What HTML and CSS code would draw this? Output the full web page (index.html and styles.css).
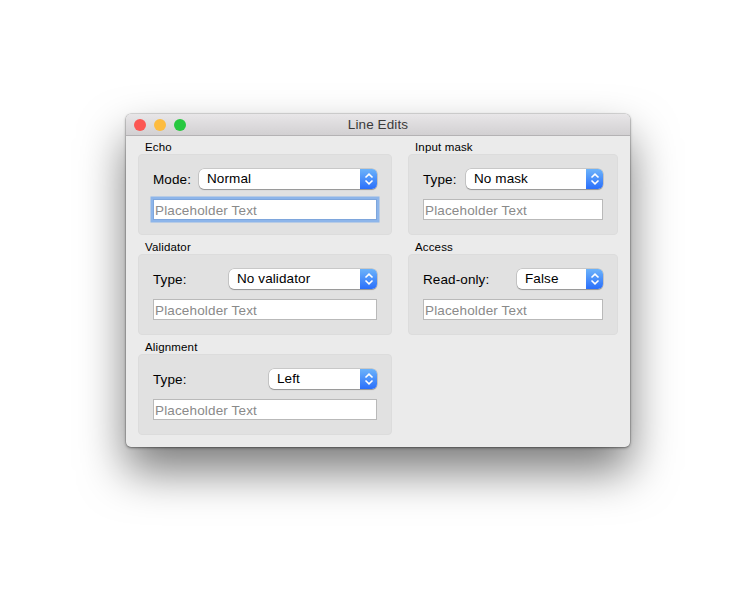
FILE: index.html
```html
<!DOCTYPE html>
<html lang="en">
<head>
    <meta charset="UTF-8">
    <title>Line Edits</title>
    <link rel="stylesheet" href="styles.css">
</head>
<body>
    <div class="window">
        <div class="titlebar">
            <div class="traffic">
                <span class="light light-close"></span>
                <span class="light light-min"></span>
                <span class="light light-max"></span>
            </div>
            <div class="window-title">Line Edits</div>
        </div>
        <div class="content">
            <section class="group">
                <div class="group-title">Echo</div>
                <div class="group-box">
                    <div class="row">
                        <span class="row-label">Mode:</span>
                        <div class="combo combo-echo">
                            <span class="combo-value">Normal</span>
                            <span class="combo-arrows"><svg width="10" height="14" viewBox="0 0 10 14"><path d="M1.5 5.5 5 2.2 8.5 5.5M1.5 8.5 5 11.8 8.5 8.5"/></svg></span>
                        </div>
                    </div>
                    <input class="field field-focus" type="text" placeholder="Placeholder Text">
                </div>
            </section>
            <section class="group">
                <div class="group-title">Input mask</div>
                <div class="group-box">
                    <div class="row">
                        <span class="row-label">Type:</span>
                        <div class="combo combo-mask">
                            <span class="combo-value">No mask</span>
                            <span class="combo-arrows"><svg width="10" height="14" viewBox="0 0 10 14"><path d="M1.5 5.5 5 2.2 8.5 5.5M1.5 8.5 5 11.8 8.5 8.5"/></svg></span>
                        </div>
                    </div>
                    <input class="field" type="text" placeholder="Placeholder Text">
                </div>
            </section>
            <section class="group">
                <div class="group-title">Validator</div>
                <div class="group-box">
                    <div class="row">
                        <span class="row-label">Type:</span>
                        <div class="combo combo-validator">
                            <span class="combo-value">No validator</span>
                            <span class="combo-arrows"><svg width="10" height="14" viewBox="0 0 10 14"><path d="M1.5 5.5 5 2.2 8.5 5.5M1.5 8.5 5 11.8 8.5 8.5"/></svg></span>
                        </div>
                    </div>
                    <input class="field" type="text" placeholder="Placeholder Text">
                </div>
            </section>
            <section class="group">
                <div class="group-title">Access</div>
                <div class="group-box">
                    <div class="row">
                        <span class="row-label">Read-only:</span>
                        <div class="combo combo-access">
                            <span class="combo-value">False</span>
                            <span class="combo-arrows"><svg width="10" height="14" viewBox="0 0 10 14"><path d="M1.5 5.5 5 2.2 8.5 5.5M1.5 8.5 5 11.8 8.5 8.5"/></svg></span>
                        </div>
                    </div>
                    <input class="field" type="text" placeholder="Placeholder Text">
                </div>
            </section>
            <section class="group">
                <div class="group-title">Alignment</div>
                <div class="group-box">
                    <div class="row">
                        <span class="row-label">Type:</span>
                        <div class="combo combo-align">
                            <span class="combo-value">Left</span>
                            <span class="combo-arrows"><svg width="10" height="14" viewBox="0 0 10 14"><path d="M1.5 5.5 5 2.2 8.5 5.5M1.5 8.5 5 11.8 8.5 8.5"/></svg></span>
                        </div>
                    </div>
                    <input class="field" type="text" placeholder="Placeholder Text">
                </div>
            </section>
        </div>
    </div>
</body>
</html>
```

FILE: styles.css
```css
* {
    margin: 0;
    padding: 0;
    box-sizing: border-box;
}

body {
    font-family: "Liberation Sans", Arial, sans-serif;
    background: #ffffff;
    color: #000000;
    width: 750px;
    height: 600px;
    overflow: hidden;
    padding: 114px 120px 0 126px;
}

.window {
    width: 504px;
    height: 333px;
    background: #ebebeb;
    border-radius: 5px;
    overflow: hidden;
    box-shadow:
        0 0 0 0.5px rgba(0, 0, 0, 0.2),
        0 24px 46px rgba(0, 0, 0, 0.52),
        0 1px 3px rgba(0, 0, 0, 0.4);
}

.titlebar {
    position: relative;
    height: 22px;
    background: linear-gradient(180deg, #e8e6e8 0%, #d2d0d2 100%);
    border-bottom: 1px solid #b4b2b4;
    display: flex;
    align-items: center;
    justify-content: center;
}

.traffic {
    position: absolute;
    top: 5px;
    left: 8px;
    display: flex;
    gap: 8px;
}

.light {
    width: 12px;
    height: 12px;
    border-radius: 50%;
}

.light-close { background: #fc5753; }
.light-min { background: #fdbc40; }
.light-max { background: #27c840; }

.window-title {
    font-size: 13.5px;
    letter-spacing: 0.1px;
    color: #3a3a3a;
}

.content {
    display: grid;
    grid-template-columns: 254px 210px;
    column-gap: 16px;
    row-gap: 6px;
    padding: 5px 12px 0;
}

.group-title {
    font-size: 11.5px;
    letter-spacing: 0.15px;
    line-height: 13px;
    height: 13px;
    padding-left: 7px;
    color: #000000;
}

.group-box {
    height: 81px;
    background: #e1e1e1;
    border: 1px solid #dcdcdc;
    border-radius: 4px;
    padding: 14px 14px 0;
    display: flex;
    flex-direction: column;
    gap: 10px;
}

.row {
    display: flex;
    align-items: center;
    justify-content: space-between;
    height: 20px;
}

.row-label {
    font-size: 13.5px;
    letter-spacing: 0.1px;
}

.combo {
    height: 20px;
    display: flex;
    background: #ffffff;
    border-radius: 5px;
    overflow: hidden;
    box-shadow: 0 0 0 0.5px rgba(0, 0, 0, 0.22), 0 1px 1px rgba(0, 0, 0, 0.25);
}

.combo-echo { width: 178.5px; }
.combo-mask { width: 137.5px; }
.combo-validator { width: 148.5px; }
.combo-access { width: 86.5px; }
.combo-align { width: 108.5px; }

.combo-value {
    flex: 1;
    font-size: 13.5px;
    letter-spacing: 0.1px;
    line-height: 19px;
    padding-left: 8.5px;
}

.combo-arrows {
    width: 17px;
    background: linear-gradient(180deg, #6cb3fa 0%, #2a6ffb 100%);
    display: flex;
    align-items: center;
    justify-content: center;
}

.combo-arrows svg path {
    fill: none;
    stroke: #ffffff;
    stroke-width: 1.6;
}

.field {
    display: block;
    width: 224px;
    height: 21px;
    font-family: inherit;
    font-size: 13.5px;
    letter-spacing: 0.15px;
    padding: 2px 1px 0;
    background: #ffffff;
    border: 1px solid #b9b9b9;
    border-radius: 0;
    outline: none;
}

.group:nth-child(even) .field {
    width: 180px;
}

.field::placeholder {
    color: #8a8a8a;
    opacity: 1;
}

.field-focus {
    border-color: #7ea6dc;
    box-shadow: 0 0 0 2.5px #8db5ea;
}
```
